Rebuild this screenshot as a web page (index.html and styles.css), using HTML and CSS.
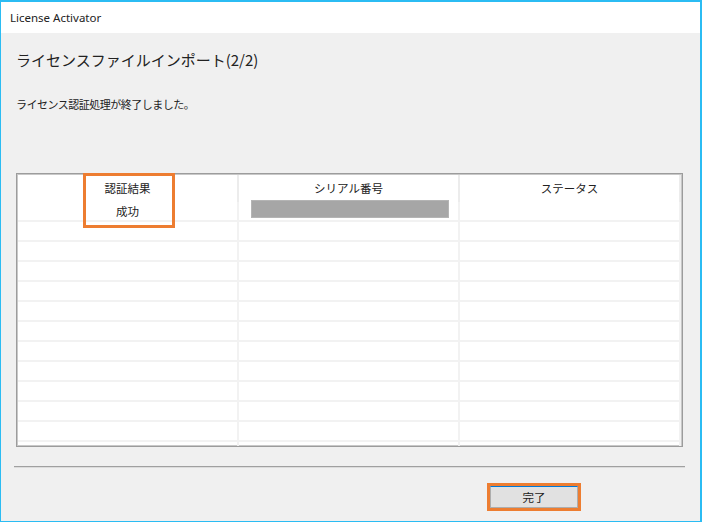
FILE: index.html
```html
<!DOCTYPE html>
<html lang="ja">
<head>
<meta charset="utf-8">
<title>License Activator</title>
<link rel="stylesheet" href="styles.css">
</head>
<body>
<div class="window">
  <div class="titlebar">License Activator</div>
  <div class="content">
    <h1 class="heading">ライセンスファイルインポート(2/2)</h1>
    <p class="message">ライセンス認証処理が終了しました。</p>
    <div class="list-wrap">
      <div class="list">
        <div class="list-head">
          <div class="hcell">認証結果</div>
          <div class="hcell">シリアル番号</div>
          <div class="hcell">ステータス</div>
        </div>
        <div class="row">
          <div class="cell">成功</div>
          <div class="cell"><span class="serial-mask"></span></div>
          <div class="cell"></div>
        </div>
        <div class="row"><div class="cell"></div><div class="cell"></div><div class="cell"></div></div>
        <div class="row"><div class="cell"></div><div class="cell"></div><div class="cell"></div></div>
        <div class="row"><div class="cell"></div><div class="cell"></div><div class="cell"></div></div>
        <div class="row"><div class="cell"></div><div class="cell"></div><div class="cell"></div></div>
        <div class="row"><div class="cell"></div><div class="cell"></div><div class="cell"></div></div>
        <div class="row"><div class="cell"></div><div class="cell"></div><div class="cell"></div></div>
        <div class="row"><div class="cell"></div><div class="cell"></div><div class="cell"></div></div>
        <div class="row"><div class="cell"></div><div class="cell"></div><div class="cell"></div></div>
        <div class="row"><div class="cell"></div><div class="cell"></div><div class="cell"></div></div>
        <div class="row"><div class="cell"></div><div class="cell"></div><div class="cell"></div></div>
        <div class="row"><div class="cell"></div><div class="cell"></div><div class="cell"></div></div>
        <div class="row"><div class="cell"></div><div class="cell"></div><div class="cell"></div></div>
      </div>
      <div class="mark-result"></div>
    </div>
    <div class="separator"></div>
    <div class="footer">
      <span class="mark-btn"><button class="btn-done" type="button">完了</button></span>
    </div>
  </div>
</div>
</body>
</html>
```

FILE: styles.css
```css
html, body {
  margin: 0;
  padding: 0;
  background: #ffffff;
}

body {
  font-family: "Noto Sans CJK JP", "Noto Sans", sans-serif;
  color: #1a1a1a;
}

.window {
  width: 702px;
  height: 522px;
  box-sizing: border-box;
  border: 1px solid #2bbcf3;
  border-top-width: 2px;
  border-right-width: 2px;
  display: flex;
  flex-direction: column;
  overflow: hidden;
}

.titlebar {
  height: 31px;
  flex: none;
  background: #ffffff;
  padding-left: 9px;
  font-family: "Noto Sans", sans-serif;
  font-size: 11.5px;
  line-height: 31px;
  color: #222;
  box-sizing: border-box;
}

.content {
  flex: 1;
  background: #f0f0f0;
  padding: 17px 15px 0 15px;
  display: flex;
  flex-direction: column;
}

.heading {
  margin: 0;
  font-size: 15px;
  font-weight: normal;
  line-height: 20px;
  color: #222;
}

.message {
  margin: 26px 0 0 0;
  font-size: 11px;
  line-height: 16px;
  letter-spacing: -0.5px;
  color: #222;
}

.list-wrap {
  position: relative;
  margin-top: 61px;
  width: 667px;
  height: 274px;
}

.list {
  width: 667px;
  height: 274px;
  box-sizing: border-box;
  border: 1px solid #9c9c9c;
  box-shadow: inset 0 0 0 1px #c8c8c8;
  background: #ffffff;
  padding: 1px;
  overflow: hidden;
}

.list-head {
  display: flex;
  height: 27px;
}

.hcell {
  width: 221px;
  flex: none;
  box-sizing: border-box;
  border-right: 2px solid #ececec;
  text-align: center;
  font-size: 11.5px;
  line-height: 26px;
  color: #222;
}

.row {
  display: flex;
  height: 20px;
}

.cell {
  width: 221px;
  flex: none;
  box-sizing: border-box;
  border-right: 2px solid #f2f2f2;
  border-bottom: 2px solid #f2f2f2;
  text-align: center;
  font-size: 11.5px;
  line-height: 18px;
  color: #222;
  position: relative;
}

.serial-mask {
  display: block;
  margin: -2px 0 0 12px;
  width: 198px;
  height: 18px;
  background: #a6a6a6;
  box-shadow: inset 0 0 0 1px #b4b4b4;
}

.mark-result {
  position: absolute;
  left: 67px;
  top: 0;
  width: 92px;
  height: 55px;
  box-sizing: border-box;
  border: 3px solid #ed7d31;
}

.separator {
  margin: 19px 0 0 -2px;
  width: 671px;
  height: 1px;
  background: #a0a0a0;
  border-bottom: 1px solid #dcdcdc;
}

.footer {
  display: flex;
  padding-left: 471px;
  margin-top: 15px;
}

.mark-btn {
  display: block;
  border: 3px solid #ed7d31;
  width: 94px;
  height: 28px;
  box-sizing: border-box;
}

.btn-done {
  display: block;
  width: 88px;
  height: 22px;
  margin: 0;
  padding: 0;
  box-sizing: border-box;
  background: #e1e1e1;
  border: 1px solid #adadad;
  border-top-color: #0078d7;
  font-family: "Noto Sans CJK JP", sans-serif;
  font-size: 11.5px;
  line-height: 20px;
  color: #222;
}
```
